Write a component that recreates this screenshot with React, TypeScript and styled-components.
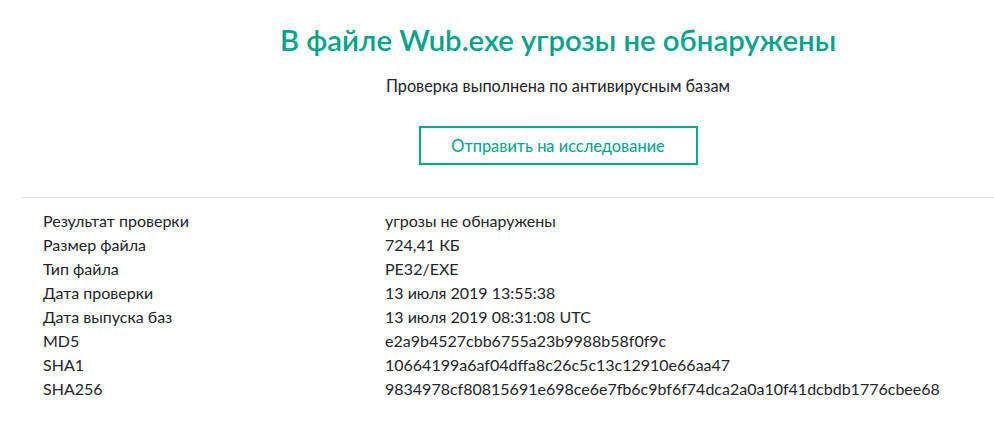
import { Fragment } from "react";
import styled, { createGlobalStyle } from "styled-components";

const GlobalStyle = createGlobalStyle`
  html, body {
    margin: 0;
    padding: 0;
    background: #fff;
    overflow: hidden;
  }
  body {
    font-family: Lato, "Open Sans", sans-serif;
    color: #23232b;
  }
`;

const Page = styled.main`
  margin-left: 22px;
`;

const Header = styled.section`
  display: flex;
  flex-direction: column;
  align-items: center;
  padding: 22px 0 32px 100px;
  border-bottom: 1px solid #e3e3e3;
`;

const Title = styled.h1`
  margin: 0;
  font-size: 29.3px;
  line-height: 36px;
  font-weight: 600;
  color: #00a28a;
`;

const Subtitle = styled.p`
  margin: 18px 0 0;
  font-size: 16.3px;
  line-height: 20px;
`;

const SubmitButton = styled.button`
  margin-top: 30px;
  width: 279px;
  height: 39px;
  border: 2px solid #00a88e;
  background: #fff;
  color: #00a28a;
  font-family: inherit;
  font-size: 16.4px;
  cursor: pointer;
`;

const Details = styled.dl`
  display: grid;
  grid-template-columns: 342px 1fr;
  margin: 0;
  padding: 11px 0 0 21px;
  font-size: 16px;
  line-height: 24px;
`;

const Label = styled.dt`
  margin: 0;
`;

const Value = styled.dd`
  margin: 0;
`;

const rows: [string, string][] = [
  ["Результат проверки", "угрозы не обнаружены"],
  ["Размер файла", "724,41 КБ"],
  ["Тип файла", "PE32/EXE"],
  ["Дата проверки", "13 июля 2019 13:55:38"],
  ["Дата выпуска баз", "13 июля 2019 08:31:08 UTC"],
  ["MD5", "e2a9b4527cbb6755a23b9988b58f0f9c"],
  ["SHA1", "10664199a6af04dffa8c26c5c13c12910e66aa47"],
  ["SHA256", "9834978cf80815691e698ce6e7fb6c9bf6f74dca2a0a10f41dcbdb1776cbee68"],
];

export default function App() {
  return (
    <>
      <GlobalStyle />
      <Page>
        <Header>
          <Title>В файле Wub.exe угрозы не обнаружены</Title>
          <Subtitle>Проверка выполнена по антивирусным базам</Subtitle>
          <SubmitButton>Отправить на исследование</SubmitButton>
        </Header>
        <Details>
          {rows.map(([label, value]) => (
            <Fragment key={label}>
              <Label>{label}</Label>
              <Value>{value}</Value>
            </Fragment>
          ))}
        </Details>
      </Page>
    </>
  );
}
